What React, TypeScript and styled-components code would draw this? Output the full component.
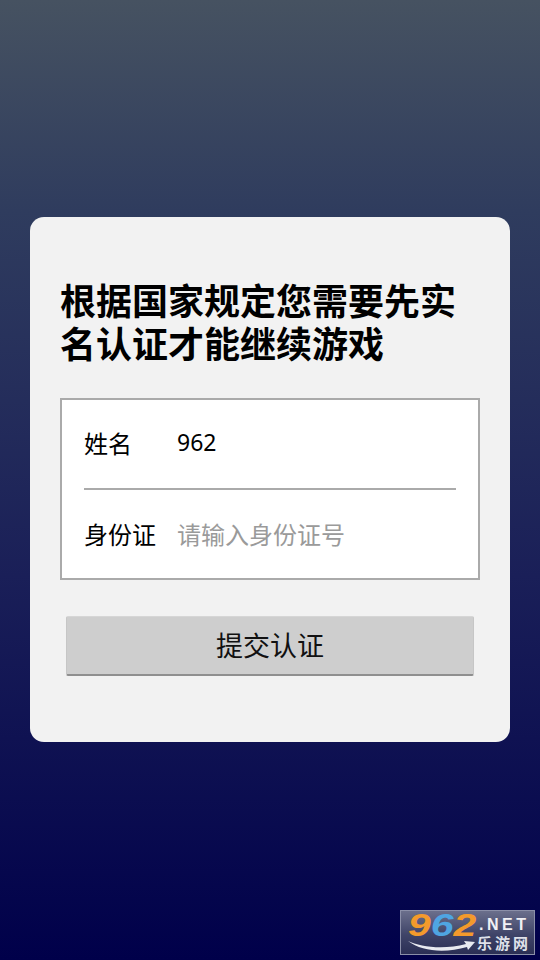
import styled, { createGlobalStyle } from 'styled-components'

const GlobalStyle = createGlobalStyle`
  html, body {
    margin: 0;
    padding: 0;
  }
  body {
    font-family: "Noto Sans", "Noto Sans CJK SC", sans-serif;
  }
`

const Page = styled.div`
  position: relative;
  width: 540px;
  height: 960px;
  overflow: hidden;
  box-sizing: border-box;
  padding-top: 217px;
  background: linear-gradient(180deg, #465261 0%, #2f3c5e 22%, #1a1f58 60%, #00004a 100%);
`

const Card = styled.div`
  width: 480px;
  height: 525px;
  margin: 0 auto;
  box-sizing: border-box;
  padding: 61px 30px 0;
  background: #f2f2f2;
  border-radius: 14px;
`

const Title = styled.h1`
  margin: 0 0 34px;
  font-family: "Noto Sans CJK SC", sans-serif;
  font-size: 36px;
  line-height: 43px;
  font-weight: 700;
  color: #000;
`

const FormBox = styled.div`
  box-sizing: border-box;
  height: 182px;
  border: 2px solid #aaa;
  background: #fff;
  padding: 0 22px;
`

const Row = styled.div<{ $underline?: boolean }>`
  display: flex;
  align-items: center;
  height: ${({ $underline }) => ($underline ? '90px' : '88px')};
  padding-bottom: ${({ $underline }) => ($underline ? '3px' : '0')};
  box-sizing: border-box;
  border-bottom: ${({ $underline }) => ($underline ? '2px solid #aaa' : 'none')};
`

const Label = styled.span`
  width: 93px;
  flex: none;
  font-family: "Noto Sans CJK SC", sans-serif;
  font-size: 24px;
  line-height: 24px;
  color: #000;
`

const Value = styled.span`
  padding-bottom: 1px;
  font-family: "Noto Sans", "Noto Sans CJK SC", sans-serif;
  font-size: 23px;
  line-height: 24px;
  color: #000;
`

const Placeholder = styled.span`
  font-family: "Noto Sans CJK SC", sans-serif;
  font-size: 24px;
  line-height: 24px;
  color: #9a9a9a;
`

const SubmitButton = styled.button`
  display: block;
  box-sizing: border-box;
  width: 408px;
  height: 60px;
  margin: 36px 0 0 6px;
  padding: 0 0 2px;
  background: #cecece;
  border: 1px solid #c6c6c6;
  border-top-color: #d6d6d6;
  border-bottom: 2px solid #8f8f8f;
  border-radius: 2px;
  font-family: "Noto Sans CJK SC", sans-serif;
  font-size: 27px;
  line-height: 36px;
  color: #111;
`

const Watermark = styled.div`
  position: absolute;
  left: 400px;
  top: 910px;
  width: 135px;
  height: 45px;
  box-sizing: border-box;
  display: flex;
  gap: 6px;
  padding: 0 0 0 7px;
  border: 1px solid #8b8fa8;
  background: linear-gradient(180deg, #6b6f8c 0%, #3f4468 55%, #2b2f55 100%);
`

const LogoLeft = styled.div`
  width: 65px;
  flex: none;
  display: flex;
  flex-direction: column;
`

const LogoNumber = styled.span`
  display: block;
  font-family: "Liberation Sans", sans-serif;
  font-size: 31px;
  line-height: 29px;
  font-weight: 700;
  font-style: italic;
  white-space: nowrap;
  color: #f39a2c;
  transform: scaleX(1.32);
  transform-origin: left center;
`

const LogoBlue = styled.span`
  color: #4fa5e2;
`

const LogoRight = styled.div`
  display: flex;
  flex-direction: column;
  gap: 3px;
  padding-top: 6px;
`

const LogoNet = styled.span`
  font-family: "Liberation Sans", sans-serif;
  font-size: 16px;
  line-height: 15px;
  font-weight: 700;
  letter-spacing: 3.5px;
  white-space: nowrap;
  color: #f0f0f4;
`

const LogoCn = styled.span`
  margin-left: -2px;
  font-family: "Noto Sans CJK SC", sans-serif;
  font-size: 15px;
  line-height: 16px;
  font-weight: 700;
  letter-spacing: 3px;
  white-space: nowrap;
  color: #dfe1ea;
`

export default function App() {
  return (
    <>
      <GlobalStyle />
      <Page>
        <Card>
          <Title>根据国家规定您需要先实名认证才能继续游戏</Title>
          <FormBox>
            <Row $underline>
              <Label>姓名</Label>
              <Value>962</Value>
            </Row>
            <Row>
              <Label>身份证</Label>
              <Placeholder>请输入身份证号</Placeholder>
            </Row>
          </FormBox>
          <SubmitButton>提交认证</SubmitButton>
        </Card>
        <Watermark>
          <LogoLeft>
            <LogoNumber>
              9<LogoBlue>6</LogoBlue>2
            </LogoNumber>
            <svg width="68" height="13" viewBox="0 0 68 13">
              <path d="M0 1 C12 7 36 10 58 4 L56 1 L67 2 L60 10 L59 7 C38 13 14 12 0 1 Z" fill="#e8eaf0" />
            </svg>
          </LogoLeft>
          <LogoRight>
            <LogoNet>.NET</LogoNet>
            <LogoCn>乐游网</LogoCn>
          </LogoRight>
        </Watermark>
      </Page>
    </>
  )
}
